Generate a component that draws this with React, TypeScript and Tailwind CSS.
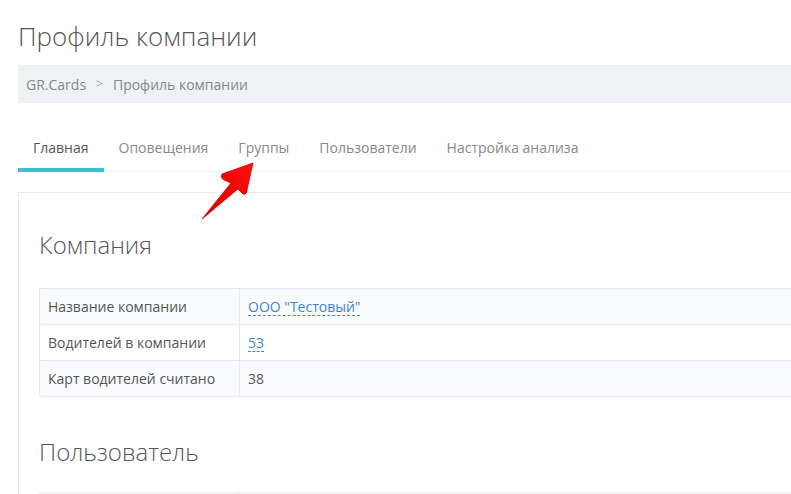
import React from "react";

const tabs = ["Главная", "Оповещения", "Группы", "Пользователи", "Настройка анализа"];

function Row({
  label,
  children,
  striped,
}: {
  label: string;
  children: React.ReactNode;
  striped?: boolean;
}) {
  return (
    <div className={`flex h-9 border-b border-[#e6e9ed] ${striped ? "bg-[#fafbfd]" : "bg-white"}`}>
      <div className="w-[200px] shrink-0 border-r border-[#e6e9ed] px-2 flex items-center">{label}</div>
      <div className="flex-1 px-2 flex items-center">{children}</div>
    </div>
  );
}

function DashedLink({ children }: { children: React.ReactNode }) {
  return (
    <span className="text-[#3f86cf] border-b border-dashed border-[#3f86cf] leading-[17px]">{children}</span>
  );
}

export default function App() {
  return (
    <div
      className="relative w-[791px] h-[494px] overflow-hidden bg-white text-[#555] text-[14px]"
      style={{ fontFamily: '"Open Sans", "Liberation Sans", sans-serif' }}
    >
      <div className="w-[1000px] pl-[18px]">
        <h1 className="pt-[19px] text-[26px] font-light leading-[34px] text-[#555]">Профиль компании</h1>

        <div className="mt-[12px] h-[38px] bg-[#eef2f5] flex items-center pl-2 text-[#888]">
          <span>GR.Cards</span>
          <span className="mx-[10px] text-[#aaa] text-[12px]">&gt;</span>
          <span>Профиль компании</span>
        </div>

        <div className="mt-[28px] flex border-b border-[#eceff1]">
          {tabs.map((t, i) => (
            <div
              key={t}
              className={`px-[15px] pt-[6px] pb-[10px] border-b-[4px] -mb-[1px] ${
                i === 0 ? "border-[#35c3d0] text-[#555]" : "border-transparent text-[#888]"
              }`}
            >
              {t}
            </div>
          ))}
        </div>

        <div className="mt-[20px] border-l border-t border-[#e6e9ed] pl-[20px] pt-[35px] pb-10">
          <h2 className="text-[24px] font-light leading-[34px] text-[#555]">Компания</h2>
          <div className="mt-[26px] border-l border-t border-[#e6e9ed]">
            <Row label="Название компании" striped>
              <DashedLink>ООО "Тестовый"</DashedLink>
            </Row>
            <Row label="Водителей в компании">
              <DashedLink>53</DashedLink>
            </Row>
            <Row label="Карт водителей считано" striped>
              38
            </Row>
          </div>

          <h2 className="mt-[38px] text-[24px] font-light leading-[34px] text-[#555]">Пользователь</h2>
          <div className="mt-[23px] border-l border-t border-[#e6e9ed]">
            <div className="flex h-9 border-b border-[#e6e9ed] bg-[#fafbfd]">
              <div className="w-[200px] shrink-0 border-r border-[#e6e9ed]" />
              <div className="flex-1" />
            </div>
          </div>
        </div>
      </div>

      <svg className="absolute left-0 top-0 pointer-events-none" width="791" height="494">
        <defs>
          <linearGradient id="arr" x1="0" y1="1" x2="1" y2="0">
            <stop offset="0" stopColor="#d40000" />
            <stop offset="1" stopColor="#ff1010" />
          </linearGradient>
        </defs>
        <path
          d="M253 163 L222 174 Q220 178 224 180 L231 183 L202 219 L238 189 L243 194 Q247 195 247 190 Z"
          fill="url(#arr)"
          stroke="#c00"
          strokeWidth="0.8"
          strokeLinejoin="round"
        />
      </svg>
    </div>
  );
}
